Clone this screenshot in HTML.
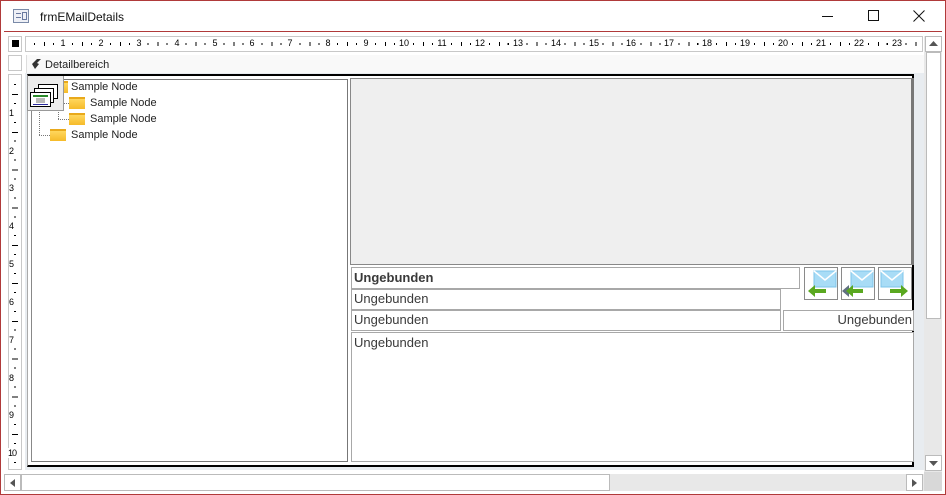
<!DOCTYPE html>
<html><head><meta charset="utf-8"><style>
*{margin:0;padding:0;box-sizing:border-box}
body{width:946px;height:495px;overflow:hidden;background:#fff;position:relative;font-family:"Liberation Sans",sans-serif}
.a{position:absolute}
.win{left:0;top:0;width:946px;height:495px;border:1px solid #b03a3a}
.rn{position:absolute;font-size:9px;color:#000;top:38px;transform:translateX(-50%);line-height:10px}
.vn{position:absolute;font-size:9px;color:#000;left:9px;line-height:10px;transform:translateY(-50%)}
.tx{font-family:"Liberation Sans",sans-serif;font-size:11px;color:#222}
.fld{position:absolute;border:1px solid #a8a8a8;font-size:13px;color:#3a3a3a;padding-left:2px;line-height:18px;background:#fff}
.btn{position:absolute;width:34px;height:33px;border:1px solid #8a8a8a;background:#fff}
.fold{position:absolute;width:16px;height:12px;background:linear-gradient(#ffd75e,#f6bb2a);border-top:2px solid #e9a91b}
</style></head><body>
<div class="a win"></div>
<div class="a" style="left:13px;top:9px;width:16px;height:14px;border:1px solid #7a8aa8;background:#eef0f6"></div>
<div class="a" style="left:16px;top:13px;width:5px;height:1px;background:#6a7aa0"></div>
<div class="a" style="left:16px;top:17px;width:5px;height:1px;background:#6a7aa0"></div>
<div class="a" style="left:22px;top:12px;width:5px;height:8px;border:1px solid #6a7aa0"></div>
<div class="a" style="left:40px;top:10px;font-size:12px;color:#111">frmEMailDetails</div>
<div class="a" style="left:822px;top:16px;width:11px;height:1px;background:#111"></div>
<div class="a" style="left:868px;top:10px;width:11px;height:11px;border:1px solid #111"></div>
<svg class="a" style="left:913px;top:10px" width="12" height="12"><path d="M0.5 0.5L11.5 11.5M11.5 0.5L0.5 11.5" stroke="#111" stroke-width="1"/></svg>
<div class="a" style="left:4px;top:31px;width:938px;height:1px;background:#b03a3a"></div>
<div class="a" style="left:1px;top:32px;width:944px;height:462px;background:#fff"></div>
<div class="a" style="left:8px;top:36px;width:14px;height:16px;border:1px solid #c8c8c8;background:#fff"></div>
<div class="a" style="left:12px;top:40px;width:7px;height:7px;background:#000"></div>
<div class="a" style="left:25px;top:36px;width:898px;height:16px;border:1px solid #c8c8c8;background:#fff"></div>
<div class="a" style="left:34px;top:43px;width:888px;height:2px;background:repeating-linear-gradient(90deg,#000 0 1px,transparent 1px 18.95px)"></div>
<div class="a" style="left:44px;top:42px;width:878px;height:4px;background:repeating-linear-gradient(90deg,#000 0 1px,transparent 1px 37.9px)"></div>
<span class="rn" style="left:63px;background:#fff">1</span><span class="rn" style="left:101px;background:#fff">2</span><span class="rn" style="left:139px;background:#fff">3</span><span class="rn" style="left:177px;background:#fff">4</span><span class="rn" style="left:215px;background:#fff">5</span><span class="rn" style="left:252px;background:#fff">6</span><span class="rn" style="left:290px;background:#fff">7</span><span class="rn" style="left:328px;background:#fff">8</span><span class="rn" style="left:366px;background:#fff">9</span><span class="rn" style="left:404px;background:#fff">10</span><span class="rn" style="left:442px;background:#fff">11</span><span class="rn" style="left:480px;background:#fff">12</span><span class="rn" style="left:518px;background:#fff">13</span><span class="rn" style="left:556px;background:#fff">14</span><span class="rn" style="left:594px;background:#fff">15</span><span class="rn" style="left:631px;background:#fff">16</span><span class="rn" style="left:669px;background:#fff">17</span><span class="rn" style="left:707px;background:#fff">18</span><span class="rn" style="left:745px;background:#fff">19</span><span class="rn" style="left:783px;background:#fff">20</span><span class="rn" style="left:821px;background:#fff">21</span><span class="rn" style="left:859px;background:#fff">22</span><span class="rn" style="left:897px;background:#fff">23</span>
<div class="a" style="left:8px;top:55px;width:14px;height:16px;border:1px solid #c8c8c8;background:#fff"></div>
<div class="a" style="left:8px;top:74px;width:14px;height:396px;border:1px solid #c8c8c8;background:#fff"></div>
<div class="a" style="left:14px;top:84px;width:2px;height:384px;background:repeating-linear-gradient(180deg,#000 0 1px,transparent 1px 18.9px)"></div>
<div class="a" style="left:12px;top:94px;width:6px;height:374px;background:repeating-linear-gradient(180deg,#000 0 1px,transparent 1px 37.8px)"></div>
<span class="vn" style="top:113px;background:#fff">1</span><span class="vn" style="top:151px;background:#fff">2</span><span class="vn" style="top:188px;background:#fff">3</span><span class="vn" style="top:226px;background:#fff">4</span><span class="vn" style="top:264px;background:#fff">5</span><span class="vn" style="top:302px;background:#fff">6</span><span class="vn" style="top:340px;background:#fff">7</span><span class="vn" style="top:378px;background:#fff">8</span><span class="vn" style="top:415px;background:#fff">9</span><span class="vn" style="top:453px;left:8px;background:#fff;letter-spacing:-1px">10</span>
<div class="a" style="left:26px;top:55px;width:898px;height:18px;background:#f9f9f9;border-left:1px solid #ddd"></div>
<svg class="a" style="left:31px;top:59px" width="11" height="10"><path d="M1 5L6 0H10L6 4L8 5L4 10Z" fill="#333"/></svg>
<div class="a" style="left:45px;top:59px;font-size:11px;color:#222">Detailbereich</div>
<div class="a" style="left:25px;top:73px;width:899px;height:397px;background:#e8ecf0"></div>
<div class="a" style="left:27px;top:74px;width:887px;height:393px;background:#fff;border-top:2px solid #000;border-right:2px solid #000;border-bottom:2px solid #000;border-left:1px solid #aaa"></div>
<div class="a" style="left:31px;top:79px;width:317px;height:383px;border:1px solid #777;border-left:1px solid #888"></div>
<div class="a" style="left:39px;top:100px;width:1px;height:35px;border-left:1px dotted #777"></div>
<div class="a" style="left:39px;top:135px;width:11px;height:1px;border-top:1px dotted #777"></div>
<div class="a" style="left:58px;top:95px;width:1px;height:24px;border-left:1px dotted #777"></div>
<div class="a" style="left:58px;top:103px;width:11px;height:1px;border-top:1px dotted #777"></div>
<div class="a" style="left:58px;top:119px;width:11px;height:1px;border-top:1px dotted #777"></div>
<div class="fold" style="left:52px;top:81px"></div>
<div class="fold" style="left:69px;top:97px"></div>
<div class="fold" style="left:69px;top:113px"></div>
<div class="fold" style="left:50px;top:129px"></div>
<div class="a tx" style="left:71px;top:81px">Sample Node</div>
<div class="a tx" style="left:90px;top:97px">Sample Node</div>
<div class="a tx" style="left:90px;top:113px">Sample Node</div>
<div class="a tx" style="left:71px;top:129px">Sample Node</div>
<div class="a" style="left:27px;top:76px;width:37px;height:35px;background:#ececec;border:1px solid #999;border-top:none"></div>
<div class="a" style="left:38px;top:84px;width:20px;height:15px;border:1px solid #000;background:#fff"></div>
<div class="a" style="left:34px;top:88px;width:20px;height:15px;border:1px solid #000;background:#fff"></div>
<div class="a" style="left:30px;top:92px;width:21px;height:15px;border:1px solid #000;background:#fff"></div>
<div class="a" style="left:33px;top:95px;width:15px;height:2px;background:#2a8a2a"></div>
<div class="a" style="left:36px;top:98px;width:9px;height:5px;background:#b8b8b8"></div>
<div class="a" style="left:33px;top:104px;width:15px;height:1px;background:#2a2aa0"></div>
<div class="a" style="left:350px;top:78px;width:564px;height:187px;background:#efefef;border:1px solid #888;border-right:3px solid #777"></div>
<div class="fld" style="left:351px;top:267px;width:449px;height:22px;font-weight:bold;line-height:20px">Ungebunden</div>
<div class="fld" style="left:351px;top:289px;width:430px;height:21px">Ungebunden</div>
<div class="fld" style="left:351px;top:310px;width:430px;height:21px">Ungebunden</div>
<div class="fld" style="left:783px;top:310px;width:131px;height:21px;text-align:right;padding-right:1px">Ungebunden</div>
<div class="fld" style="left:351px;top:332px;width:563px;height:130px;line-height:20px">Ungebunden</div>
<div class="btn" style="left:804px;top:267px"></div>
<div class="btn" style="left:841px;top:267px"></div>
<div class="btn" style="left:878px;top:267px"></div>
<svg class="a" style="left:804px;top:267px" width="112" height="33">
<rect x="10" y="4" width="22" height="16" fill="#a8dcf6" stroke="#7ec4ea"/><path d="M10 4L21 13L32 4" fill="none" stroke="#fff" stroke-width="1.5"/>
<path d="M4 24L11 18V22H22V26H11V30Z" fill="#5aa820"/>
<g transform="translate(37 0)"><rect x="10" y="4" width="22" height="16" fill="#a8dcf6" stroke="#7ec4ea"/><path d="M10 4L21 13L32 4" fill="none" stroke="#fff" stroke-width="1.5"/><path d="M1 24L8 18V30Z" fill="#607080"/><path d="M5 24L12 18V22H22V26H12V30Z" fill="#5aa820"/></g>
<g transform="translate(74 0)"><rect x="3" y="4" width="22" height="16" fill="#a8dcf6" stroke="#7ec4ea"/><path d="M3 4L14 13L25 4" fill="none" stroke="#fff" stroke-width="1.5"/><path d="M30 24L23 18V22H12V26H23V30Z" fill="#5aa820"/></g>
</svg>
<div class="a" style="left:924px;top:36px;width:18px;height:436px;background:#e8e8e8"></div>
<div class="a" style="left:925px;top:36px;width:17px;height:16px;border:1px solid #bbb;background:#fff"></div>
<svg class="a" style="left:929px;top:41px" width="9" height="5"><path d="M0 5L4.5 0L9 5Z" fill="#555"/></svg>
<div class="a" style="left:926px;top:52px;width:15px;height:267px;background:#fff;border:1px solid #bbb"></div>
<div class="a" style="left:925px;top:455px;width:17px;height:16px;border:1px solid #bbb;background:#fff"></div>
<svg class="a" style="left:929px;top:461px" width="9" height="5"><path d="M0 0L4.5 5L9 0Z" fill="#555"/></svg>
<div class="a" style="left:4px;top:474px;width:920px;height:17px;background:#e8e8e8"></div>
<div class="a" style="left:4px;top:474px;width:17px;height:17px;border:1px solid #bbb;background:#fff"></div>
<svg class="a" style="left:10px;top:479px" width="5" height="8"><path d="M5 0L0 4L5 8Z" fill="#555"/></svg>
<div class="a" style="left:21px;top:474px;width:589px;height:17px;border:1px solid #bbb;background:#fff"></div>
<div class="a" style="left:906px;top:474px;width:17px;height:17px;border:1px solid #bbb;background:#fff"></div>
<svg class="a" style="left:912px;top:479px" width="5" height="8"><path d="M0 0L5 4L0 8Z" fill="#555"/></svg>
<div class="a" style="left:924px;top:472px;width:18px;height:19px;background:#d8d8d8"></div>
</body></html>
